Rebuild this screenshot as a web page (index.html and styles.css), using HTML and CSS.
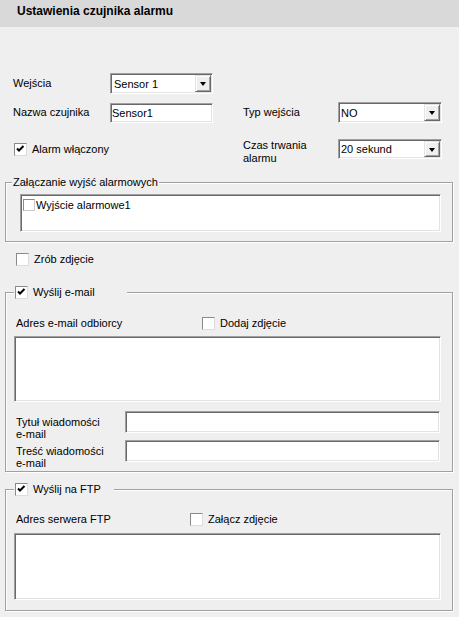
FILE: index.html
```html
<!DOCTYPE html>
<html lang="pl">
<head>
<meta charset="utf-8">
<title>Ustawienia czujnika alarmu</title>
<link rel="stylesheet" href="styles.css">
</head>
<body>
<div class="header"><h1 class="title">Ustawienia czujnika alarmu</h1></div>
<div class="content">
  <div class="row row-1">
    <span class="lbl lbl-left">Wejścia</span>
    <div class="sunken select sel-left"><span class="sel-text">Sensor 1</span><span class="sel-btn"><span class="tri"></span></span></div>
  </div>
  <div class="row row-2">
    <span class="lbl lbl-left">Nazwa czujnika</span>
    <div class="sunken input in-left">Sensor1</div>
    <span class="lbl lbl-right">Typ wejścia</span>
    <div class="sunken select sel-right"><span class="sel-text">NO</span><span class="sel-btn"><span class="tri"></span></span></div>
  </div>
  <div class="row row-3">
    <div class="check check-alarm"><span class="box"><svg viewBox="0 0 11 11" width="11" height="11"><path d="M2 4.5 L4 6.5 L8.5 2" fill="none" stroke="#000" stroke-width="2"/></svg></span><span>Alarm włączony</span></div>
    <span class="lbl lbl-right two">Czas trwania<br>alarmu</span>
    <div class="sunken select sel-right"><span class="sel-text">20 sekund</span><span class="sel-btn"><span class="tri"></span></span></div>
  </div>

  <fieldset class="group group-out">
    <legend class="legend-out">Załączanie wyjść alarmowych</legend>
    <div class="sunken listbox">
      <div class="list-item"><span class="mini-box"></span><span>Wyjście alarmowe1</span></div>
    </div>
  </fieldset>

  <div class="check check-photo"><span class="box"></span><span>Zrób zdjęcie</span></div>

  <fieldset class="group group-mail">
    <legend class="legend-check legend-mail"><span class="check"><span class="box"><svg viewBox="0 0 11 11" width="11" height="11"><path d="M2 4.5 L4 6.5 L8.5 2" fill="none" stroke="#000" stroke-width="2"/></svg></span><span>Wyślij e-mail</span></span></legend>
    <div class="line-row mail-row">
      <span class="lbl mail-lbl">Adres e-mail odbiorcy</span>
      <div class="check"><span class="box"></span><span>Dodaj zdjęcie</span></div>
    </div>
    <div class="sunken area area-mail"></div>
    <div class="field-row field-first">
      <span class="lbl field-lbl">Tytuł wiadomości<br>e-mail</span>
      <div class="sunken field"></div>
    </div>
    <div class="field-row field-second">
      <span class="lbl field-lbl">Treść wiadomości<br>e-mail</span>
      <div class="sunken field"></div>
    </div>
  </fieldset>

  <fieldset class="group group-ftp">
    <legend class="legend-check legend-ftp"><span class="check"><span class="box"><svg viewBox="0 0 11 11" width="11" height="11"><path d="M2 4.5 L4 6.5 L8.5 2" fill="none" stroke="#000" stroke-width="2"/></svg></span><span>Wyślij na FTP</span></span></legend>
    <div class="line-row ftp-row">
      <span class="lbl ftp-lbl">Adres serwera FTP</span>
      <div class="check"><span class="box"></span><span>Załącz zdjęcie</span></div>
    </div>
    <div class="sunken area area-ftp"></div>
  </fieldset>
</div>
</body>
</html>
```

FILE: styles.css
```css
html, body {
  margin: 0;
  padding: 0;
  background: #efefef;
}
body {
  width: 459px;
  height: 617px;
  overflow: hidden;
  font-family: "Liberation Sans", Arial, sans-serif;
  font-size: 11px;
  color: #000;
}
.header {
  height: 27px;
  background: #d9d9d9;
  padding-left: 17px;
  box-sizing: border-box;
}
.title {
  margin: 0;
  padding-top: 1px;
  font-size: 12px;
  font-weight: bold;
  line-height: 20px;
}
.content {
  padding-top: 46px;
}
.row {
  display: flex;
  padding-left: 13px;
}
.row-1 { height: 21px; align-items: center; }
.row-2 { height: 21px; align-items: center; margin-top: 8px; }
.row-3 { height: 26px; align-items: flex-start; margin-top: 16px; }
.lbl { line-height: 13px; white-space: nowrap; }
.lbl-left { width: 97px; }
.lbl-right { width: 95px; margin-left: 30px; }
.lbl.two { margin-top: 0; }

.sunken {
  box-sizing: border-box;
  background: #fff;
  border: 1px solid;
  border-color: #a0a0a0 #fff #fff #a0a0a0;
  box-shadow: inset 1px 1px 0 #696969, inset -1px -1px 0 #e3e3e3;
}
.select {
  display: flex;
  align-items: stretch;
  padding: 1px;
}
.sel-left { width: 103px; height: 21px; }
.sel-right { width: 104px; height: 21px; }
.row-3 .sel-right { height: 20px; }
.sel-text {
  flex: 1;
  display: flex;
  align-items: center;
  padding-left: 1px;
}
.sel-left .sel-text { padding-left: 2px; }
.sel-btn {
  width: 16px;
  box-sizing: border-box;
  background: #efefef;
  border: 1px solid;
  border-color: #e3e3e3 #696969 #696969 #e3e3e3;
  box-shadow: inset 1px 1px 0 #fff, inset -1px -1px 0 #a0a0a0;
  display: flex;
  align-items: center;
  justify-content: center;
}
.tri {
  width: 0;
  height: 0;
  border-left: 3.5px solid transparent;
  border-right: 3.5px solid transparent;
  border-top: 4px solid #000;
  margin-top: 1px;
}
.input {
  display: flex;
  align-items: center;
  padding-left: 1px;
}
.in-left { width: 103px; height: 20px; }

.check {
  display: flex;
  align-items: center;
  gap: 5px;
  height: 13px;
  line-height: 13px;
  white-space: nowrap;
}
.box {
  width: 13px;
  height: 13px;
  box-sizing: border-box;
  background: #fff;
  border: 1px solid;
  border-color: #8a8a8a #dcdcdc #dcdcdc #8a8a8a;
  flex: none;
  display: flex;
}
.box svg { display: block; }
.check-alarm { width: 199px; margin: 4px 0 0 1px; }

.group {
  margin: 0 0 0 5px;
  width: 448px;
  min-width: 0;
  box-sizing: border-box;
  padding: 0;
  border: 1px solid #a0a0a0;
  box-shadow: inset 1px 1px 0 #fff, 1px 1px 0 #fff;
}
.group legend {
  padding: 0 1px;
  line-height: 13px;
  height: 13px;
  background: #efefef;
  box-sizing: border-box;
}
.group-out { margin-top: 11px; }
.legend-out { margin-left: 6px; }
.listbox {
  margin: 5px 0 9px 14px;
  width: 421px;
  height: 38px;
  padding: 2px;
}
.list-item {
  display: flex;
  align-items: center;
  height: 16px;
  line-height: 13px;
  margin-top: 0;
}
.mini-box {
  width: 12px;
  height: 12px;
  box-sizing: border-box;
  border: 1px solid;
  border-color: #8a8a8a #c8c8c8 #c8c8c8 #8a8a8a;
  background: #fff;
  margin-right: 1px;
}

.check-photo { margin: 11px 0 0 16px; }

.legend-check { margin-left: 8px; }
.legend-mail { width: 113px; }
.legend-ftp { width: 100px; }

.group-mail { margin-top: 20px; padding-bottom: 9px; }
.line-row {
  display: flex;
  align-items: center;
  height: 13px;
  padding-left: 10px;
}
.mail-row { margin-top: 18px; }
.mail-lbl { width: 186px; }
.area {
  margin-left: 8px;
  width: 427px;
}
.area-mail { margin-top: 6px; height: 66px; }
.field-row {
  display: flex;
  align-items: flex-start;
  height: 22px;
  padding-left: 10px;
}
.field-first { margin-top: 9px; }
.field-second { margin-top: 7px; }
.field-lbl { width: 109px; line-height: 12px; margin-top: 5px; }
.field { width: 315px; height: 22px; }

.group-ftp { margin-top: 11px; padding-bottom: 10px; }
.ftp-row { margin-top: 17px; }
.ftp-lbl { width: 174px; }
.area-ftp { margin-top: 7px; height: 67px; }
```
